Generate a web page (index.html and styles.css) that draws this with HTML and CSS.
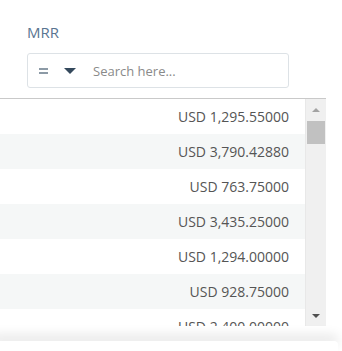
FILE: index.html
```html
<!DOCTYPE html>
<html lang="en">
  <head>
    <meta charset="UTF-8" />
    <meta name="viewport" content="width=device-width, initial-scale=1" />
    <title>MRR</title>
    <link rel="stylesheet" href="styles.css">
  </head>
  <body>
    <div class="filter">
      <div class="filter-title">MRR</div>
      <div class="search">
        <span class="op-equals"></span>
        <span class="op-caret"></span>
        <input type="text" class="search-input" placeholder="Search here..." />
      </div>
    </div>

    <div class="grid">
      <div class="rows">
        <div class="row">USD 1,295.55000</div>
        <div class="row">USD 3,790.42880</div>
        <div class="row">USD 763.75000</div>
        <div class="row">USD 3,435.25000</div>
        <div class="row">USD 1,294.00000</div>
        <div class="row">USD 928.75000</div>
        <div class="row">USD 2,400.00000</div>
      </div>
      <div class="scrollbar">
        <span class="arrow-up"></span>
        <span class="thumb"></span>
        <span class="arrow-down"></span>
      </div>
    </div>

    <div class="footer-panel"></div>
  </body>
</html>
```

FILE: styles.css
```css
* {
  box-sizing: border-box;
  margin: 0;
  padding: 0;
}
body {
  font-family: "Open Sans", Arial, sans-serif;
  background: #fff;
  color: #555;
  width: 342px;
  height: 351px;
  overflow: hidden;
  position: relative;
}
.filter {
  padding: 22px 0 0 27px;
  height: 98px;
}
.filter-title {
  font-size: 15px;
  color: #5a7591;
  line-height: 21px;
  margin-bottom: 10px;
}
.search {
  width: 262px;
  height: 35px;
  border: 1px solid #dde2e6;
  border-radius: 3px;
  display: flex;
  align-items: center;
  padding-left: 11px;
}
.op-equals {
  width: 9px;
  height: 6px;
  border-top: 2px solid #8c9aa6;
  border-bottom: 2px solid #8c9aa6;
  margin-right: 16px;
}
.op-caret {
  width: 0;
  height: 0;
  border-left: 6px solid transparent;
  border-right: 6px solid transparent;
  border-top: 6px solid #34495c;
  margin-right: 17px;
}
.search-input {
  flex: 1;
  border: none;
  outline: none;
  font-family: inherit;
  font-size: 13px;
  color: #555;
  background: transparent;
}
.search-input::placeholder {
  color: #8a8a8a;
}
.grid {
  width: 326px;
  height: 228px;
  border-top: 1px solid #c9c9c9;
  display: flex;
}
.rows {
  flex: 1;
  overflow: hidden;
}
.row {
  height: 35px;
  padding-right: 16px;
  text-align: right;
  font-size: 14px;
  line-height: 35px;
  color: #555;
}
.row:nth-child(even) {
  background: #f5f7f7;
}
.scrollbar {
  width: 21px;
  background: #f0f0f0;
  position: relative;
  border-left: 1px solid #e8e8e8;
}
.arrow-up,
.arrow-down {
  position: absolute;
  left: 6px;
  width: 0;
  height: 0;
  border-left: 4px solid transparent;
  border-right: 4px solid transparent;
}
.arrow-up {
  top: 9px;
  border-bottom: 4px solid #a3a3a3;
}
.arrow-down {
  top: 215px;
  border-top: 4px solid #505050;
}
.thumb {
  position: absolute;
  top: 22px;
  left: 1px;
  width: 18px;
  height: 23px;
  background: #c1c1c1;
}
.footer-panel {
  position: absolute;
  top: 341px;
  left: -10px;
  width: 348px;
  height: 10px;
  background: #fff;
  border-radius: 4px 4px 0 0;
  box-shadow: 0 -6px 12px rgba(0, 0, 0, 0.1);
}
```
